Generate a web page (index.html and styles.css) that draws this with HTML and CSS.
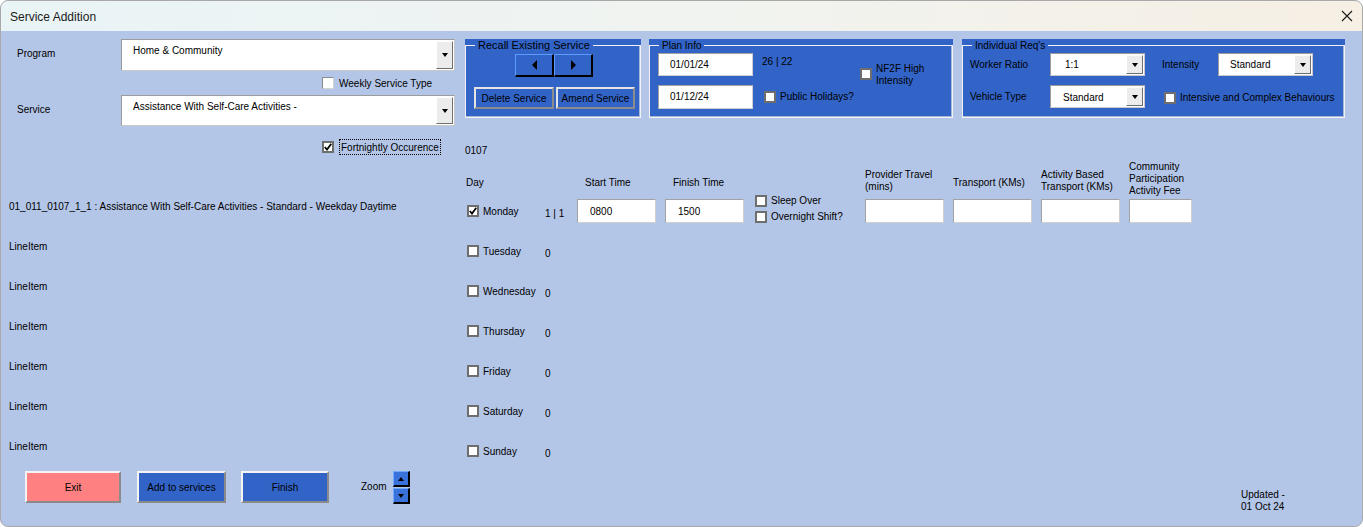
FILE: index.html
```html
<!DOCTYPE html>
<html>
<head>
<meta charset="utf-8">
<title>Service Addition</title>
<link rel="stylesheet" href="styles.css">
</head>
<body>
<div class="window">
  <div class="titlebar">
    <span class="title">Service Addition</span>
    <svg class="close" width="12" height="12" viewBox="0 0 12 12"><path d="M1 1 L11 11 M11 1 L1 11" stroke="#1a1a1a" stroke-width="1.1" fill="none"/></svg>
  </div>
  <div class="content">
    <div class="top">
      <div class="selectors">
        <div class="sel-row">
          <span class="sel-label">Program</span>
          <div class="combo combo-big"><span class="combo-text">Home &amp; Community</span><span class="drop"><i class="tri-down"></i></span></div>
        </div>
        <div class="check-row weekly"><span class="cb cb-light"></span><span class="lbl">Weekly Service Type</span></div>
        <div class="sel-row service-row">
          <span class="sel-label">Service</span>
          <div class="combo combo-big"><span class="combo-text">Assistance With Self-Care Activities -</span><span class="drop"><i class="tri-down"></i></span></div>
        </div>
        <div class="check-row fort"><span class="cb"><svg width="8" height="8" viewBox="0 0 8 8"><polyline points="0.8,4 3,6.6 7.3,0.8" fill="none" stroke="#000" stroke-width="1.8"/></svg></span><span class="focus">Fortnightly Occurence</span></div>
      </div>
      <div class="right-top">
        <div class="frames">
          <div class="frame recall">
            <div class="frame-box">
              <span class="frame-title">Recall Existing Service</span>
              <div class="nav">
                <span class="nav-btn"><i class="tri-left"></i></span><span class="nav-btn"><i class="tri-right"></i></span>
              </div>
              <div class="actions">
                <span class="btn-gray delete">Delete Service</span><span class="btn-gray amend">Amend Service</span>
              </div>
            </div>
          </div>
          <div class="frame plan">
            <div class="frame-box">
              <span class="frame-title">Plan Info</span>
              <div class="plan-body">
                <div class="plan-dates">
                  <div class="field date">01/01/24</div>
                  <div class="field date">01/12/24</div>
                </div>
                <div class="plan-mid">
                  <span class="weeks">26 | 22</span>
                  <div class="check-row pub"><span class="cb"></span><span class="lbl">Public Holidays?</span></div>
                </div>
                <div class="check-row nf2f"><span class="cb"></span><span>NF2F High<br>Intensity</span></div>
              </div>
            </div>
          </div>
          <div class="frame indiv">
            <div class="frame-box">
              <span class="frame-title">Individual Req's</span>
              <div class="req-grid">
                <span class="req-label">Worker Ratio</span>
                <div class="combo combo-small"><span class="combo-text ratio">1:1</span><span class="drop"><i class="tri-down"></i></span></div>
                <span class="req-label intensity">Intensity</span>
                <div class="combo combo-small"><span class="combo-text">Standard</span><span class="drop"><i class="tri-down"></i></span></div>
                <span class="req-label">Vehicle Type</span>
                <div class="combo combo-small"><span class="combo-text vehicle">Standard</span><span class="drop"><i class="tri-down"></i></span></div>
                <div class="check-row complex"><span class="cb"></span><span class="lbl">Intensive and Complex Behaviours</span></div>
              </div>
            </div>
          </div>
        </div>
        <div class="code">0107</div>
      </div>
    </div>

    <div class="middle">
      <div class="lines">
        <div class="line">01_011_0107_1_1 : Assistance With Self-Care Activities - Standard - Weekday Daytime</div>
        <div class="line">LineItem</div>
        <div class="line">LineItem</div>
        <div class="line">LineItem</div>
        <div class="line">LineItem</div>
        <div class="line">LineItem</div>
        <div class="line">LineItem</div>
      </div>
      <div class="days">
        <span class="hd h1 hd-day">Day</span>
        <span class="hd"></span>
        <span class="hd h1 hd-time">Start Time</span>
        <span class="hd h1 hd-time">Finish Time</span>
        <span class="hd"></span>
        <span class="hd h2">Provider Travel<br>(mins)</span>
        <span class="hd h1">Transport (KMs)</span>
        <span class="hd h2">Activity Based<br>Transport (KMs)</span>
        <span class="hd h3">Community<br>Participation<br>Activity Fee</span>

        <div class="day"><span class="cb"><svg width="8" height="8" viewBox="0 0 8 8"><polyline points="0.8,4 3,6.6 7.3,0.8" fill="none" stroke="#000" stroke-width="1.8"/></svg></span><span class="lbl">Monday</span></div>
        <span class="count">1 | 1</span>
        <div class="cell"><div class="field time">0800</div></div>
        <div class="cell"><div class="field time">1500</div></div>
        <div class="sleep">
          <div class="check-row"><span class="cb"></span><span class="lbl">Sleep Over</span></div>
          <div class="check-row"><span class="cb"></span><span class="lbl">Overnight Shift?</span></div>
        </div>
        <div class="cell"><div class="field num"></div></div>
        <div class="cell"><div class="field num"></div></div>
        <div class="cell"><div class="field num"></div></div>
        <div class="cell"><div class="field fee"></div></div>

        <div class="day"><span class="cb"></span><span class="lbl">Tuesday</span></div>
        <span class="count">0</span>
        <span class="blank"></span>
        <div class="day"><span class="cb"></span><span class="lbl">Wednesday</span></div>
        <span class="count">0</span>
        <span class="blank"></span>
        <div class="day"><span class="cb"></span><span class="lbl">Thursday</span></div>
        <span class="count">0</span>
        <span class="blank"></span>
        <div class="day"><span class="cb"></span><span class="lbl">Friday</span></div>
        <span class="count">0</span>
        <span class="blank"></span>
        <div class="day"><span class="cb"></span><span class="lbl">Saturday</span></div>
        <span class="count">0</span>
        <span class="blank"></span>
        <div class="day"><span class="cb"></span><span class="lbl">Sunday</span></div>
        <span class="count">0</span>
        <span class="blank"></span>
      </div>
    </div>

    <div class="bottom">
      <span class="btn btn-exit">Exit</span>
      <span class="btn btn-blue btn-add">Add to services</span>
      <span class="btn btn-blue btn-finish">Finish</span>
      <span class="zoom-label">Zoom</span>
      <div class="spin">
        <span class="spin-btn"><i class="tri-up"></i></span>
        <span class="spin-btn"><i class="tri-down"></i></span>
      </div>
      <div class="updated">Updated -<br>01 Oct 24</div>
    </div>
  </div>
</div>
</body>
</html>
```

FILE: styles.css
```css
* { box-sizing: border-box; }

html, body {
  margin: 0;
  padding: 0;
  background: #ffffff;
}

body {
  font-family: "Liberation Sans", Arial, sans-serif;
  font-size: 10px;
  line-height: 12px;
  color: #000;
}

.window {
  width: 1363px;
  height: 527px;
  border: 1px solid #a9a9a9;
  border-radius: 8px;
  overflow: hidden;
  background: #b4c6e7;
  display: flex;
  flex-direction: column;
}

.titlebar {
  height: 30px;
  flex: none;
  display: flex;
  align-items: center;
  justify-content: space-between;
  padding: 0 9px 0 9px;
  background: linear-gradient(to right, #e9f4f7 0%, #f1f3ef 55%, #f6efe4 100%);
}

.title {
  font-size: 12px;
  color: #1a1a1a;
  padding-top: 1px;
}

.content {
  flex: 1;
  padding: 8px 0 0 8px;
  display: flex;
  flex-direction: column;
}

.lbl {
  padding-top: 1px;
}

/* ---------- top ---------- */
.top {
  height: 121px;
  display: flex;
}

.selectors {
  width: 456px;
  flex: none;
}

.sel-row {
  display: flex;
  height: 32px;
}

.service-row {
  margin-top: 6px;
  height: 31px;
}

.sel-label {
  width: 112px;
  padding: 9px 0 0 8px;
}

.combo {
  position: relative;
  background: #fff;
  border: 1px solid #9c9c9c;
  border-right-color: #c9c9c9;
  border-bottom-color: #c9c9c9;
  display: flex;
}

.combo-big {
  width: 334px;
  height: 100%;
}

.combo-big .combo-text {
  padding: 5px 0 0 11px;
  flex: 1;
}

.combo-small {
  width: 95px;
  height: 23px;
}

.combo-small .combo-text {
  flex: 1;
  padding: 5px 0 0 11px;
}

.combo-small .combo-text.ratio {
  padding-left: 14px;
}

.drop {
  width: 17px;
  margin: 1px 1px 1px 0;
  background: #ececec;
  border-top: 1px solid #fff;
  border-left: 1px solid #fff;
  border-right: 1px solid #6f6f6f;
  border-bottom: 1px solid #6f6f6f;
  display: flex;
  align-items: center;
  justify-content: center;
}

.tri-down {
  display: block;
  width: 0;
  height: 0;
  border-left: 3.5px solid transparent;
  border-right: 3.5px solid transparent;
  border-top: 4px solid #000;
}

.tri-up {
  display: block;
  width: 0;
  height: 0;
  border-left: 3.5px solid transparent;
  border-right: 3.5px solid transparent;
  border-bottom: 4px solid #000;
}

.tri-left {
  display: block;
  width: 0;
  height: 0;
  border-top: 5px solid transparent;
  border-bottom: 5px solid transparent;
  border-right: 5px solid #000;
}

.tri-right {
  display: block;
  width: 0;
  height: 0;
  border-top: 5px solid transparent;
  border-bottom: 5px solid transparent;
  border-left: 5px solid #000;
}

.check-row {
  display: flex;
  align-items: center;
  gap: 5px;
  white-space: nowrap;
}

.cb {
  width: 12px;
  height: 12px;
  flex: none;
  background: #fff;
  border: 2px solid #6e6e6e;
  display: flex;
  align-items: center;
  justify-content: center;
}

.cb-light {
  border-color: #8a8a8a #d4d4d4 #d4d4d4 #8a8a8a;
  border-width: 1px;
}

.weekly {
  margin-top: 6px;
  height: 12px;
  padding-left: 313px;
}

.fort {
  margin-top: 13px;
  height: 16px;
  padding-left: 313px;
}

.focus {
  border: 1px dotted #000;
  padding: 2px 1px 0 1px;
  height: 16px;
  line-height: 12px;
}

.right-top {
  flex: none;
}

.frames {
  display: flex;
  gap: 8px;
}

.frame {
  background: #3264c8;
  padding-top: 6px;
  height: 79px;
}

.recall { width: 176px; }
.plan { width: 304px; }
.indiv { width: 383px; margin-left: 1px; }

.frame-box {
  position: relative;
  height: 73px;
  border: 1px solid #f2f2f2;
  box-shadow: inset -1px -1px 0 #a8b8d8;
}

.frame-title {
  position: absolute;
  top: -6px;
  left: 9px;
  padding: 0 3px;
  background: #3264c8;
  line-height: 12px;
  white-space: nowrap;
}

.recall .frame-title {
  font-size: 11px;
  top: -7px;
}

.nav {
  display: flex;
  padding: 8px 0 0 49px;
}

.nav-btn {
  width: 39px;
  height: 23px;
  background: #3264c8;
  border-top: 1px solid #5d9bff;
  border-left: 1px solid #5d9bff;
  border-right: 2px solid #000;
  border-bottom: 2px solid #000;
  display: flex;
  align-items: center;
  justify-content: center;
}

.actions {
  display: flex;
  gap: 2px;
  padding: 10px 0 0 8px;
}

.btn-gray {
  height: 22px;
  padding-top: 1px;
  background: #3264c8;
  border: 2px solid;
  border-color: #e4e4e4 #8c8c8c #8c8c8c #e4e4e4;
  display: flex;
  align-items: center;
  justify-content: center;
  white-space: nowrap;
}

.delete { width: 80px; }
.amend { width: 79px; }

.plan-body {
  display: flex;
  padding: 7px 0 0 8px;
}

.plan-dates {
  display: flex;
  flex-direction: column;
  gap: 9px;
}

.field {
  background: #fff;
  border: 1px solid #a3a3a3;
  border-right-color: #cfcfcf;
  border-bottom-color: #cfcfcf;
}

.date {
  width: 95px;
  height: 23px;
  padding: 5px 0 0 11px;
}

.plan-dates .date:last-child {
  height: 24px;
}

.plan-mid {
  width: 107px;
  display: flex;
  flex-direction: column;
}

.weeks {
  padding: 3px 0 0 9px;
}

.pub {
  margin-top: 22px;
  padding-left: 11px;
  gap: 4px;
}

.nf2f {
  align-items: center;
  align-self: flex-start;
  margin-top: 8px;
  gap: 4px;
}

.nf2f span:last-child {
  padding-top: 2px;
}

.req-grid {
  display: grid;
  grid-template-columns: 80px 95px 73px 95px;
  grid-template-rows: 23px 24px;
  row-gap: 9px;
  padding: 7px 0 0 7px;
}

.req-label {
  padding-top: 6px;
}

.intensity {
  padding-left: 17px;
}

.combo-text.vehicle {
  padding-left: 12px;
  padding-top: 6px;
}

.complex {
  grid-column: 3 / 5;
  padding-left: 19px;
  gap: 4px;
  margin-top: 1px;
}

.code {
  margin-top: 27px;
}

/* ---------- middle ---------- */
.middle {
  display: flex;
  height: 311px;
}

.lines {
  width: 456px;
  flex: none;
  padding-top: 27px;
}

.line {
  height: 40px;
  display: flex;
  align-items: center;
  white-space: nowrap;
}

.days {
  display: grid;
  grid-template-columns: 80px 32px 88px 90px 110px 88px 88px 88px 64px;
  grid-template-rows: 31px repeat(7, 40px);
  align-items: center;
}

.hd {
  align-self: start;
  line-height: 12px;
  white-space: nowrap;
}

.h1 { padding-top: 17px; }
.h2 { padding-top: 9px; }
.h3 { padding-top: 1px; }

.hd-day { padding-left: 1px; }
.hd-time { padding-left: 8px; }

.day {
  display: flex;
  align-items: center;
  gap: 4px;
  padding-left: 2px;
}

.day .lbl {
  padding-top: 2px;
}

.count {
  padding-top: 5px;
  white-space: nowrap;
}

.blank {
  grid-column: 3 / 10;
}

.cell {
  display: flex;
}

.time {
  width: 79px;
  height: 24px;
  padding: 6px 0 0 12px;
}

.num {
  width: 79px;
  height: 24px;
}

.fee {
  width: 63px;
  height: 24px;
}

.sleep {
  align-self: start;
  padding-top: 3px;
  display: flex;
  flex-direction: column;
  gap: 3px;
}

.sleep .check-row {
  gap: 4px;
}

/* ---------- bottom ---------- */
.bottom {
  display: flex;
  align-items: flex-start;
}

.btn {
  height: 32px;
  padding-top: 1px;
  border: 2px solid;
  border-color: #f4f4f4 #8a8a8a #8a8a8a #f4f4f4;
  display: flex;
  align-items: center;
  justify-content: center;
  white-space: nowrap;
}

.btn-exit {
  width: 96px;
  margin-left: 16px;
  background: #ff8080;
}

.btn-blue {
  background: #3264c8;
}

.btn-add {
  width: 89px;
  margin-left: 16px;
}

.btn-finish {
  width: 88px;
  margin-left: 15px;
}

.zoom-label {
  margin: 10px 0 0 32px;
}

.spin {
  margin-left: 6px;
  display: flex;
  flex-direction: column;
  gap: 1px;
}

.spin-btn {
  width: 17px;
  height: 16px;
  background: #3a72dc;
  border-top: 1px solid #6fa8ff;
  border-left: 1px solid #6fa8ff;
  border-right: 2px solid #000;
  border-bottom: 2px solid #000;
  display: flex;
  align-items: center;
  justify-content: center;
}

.updated {
  margin-left: auto;
  width: 121px;
  margin-top: 18px;
  white-space: nowrap;
}
```
